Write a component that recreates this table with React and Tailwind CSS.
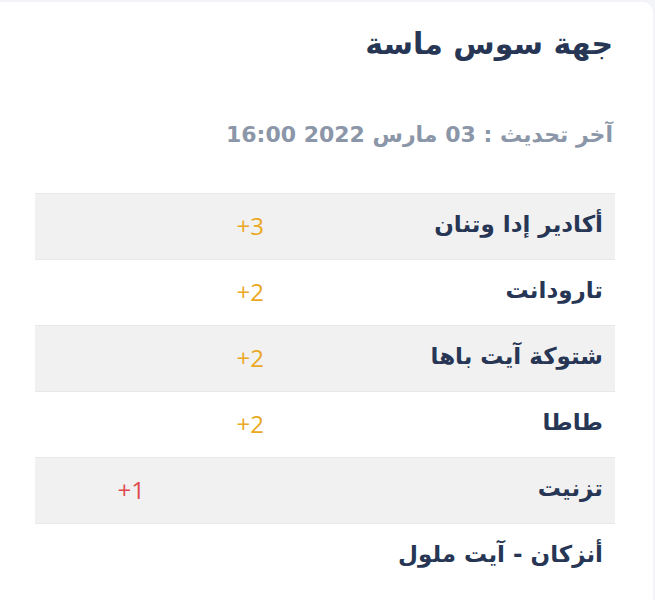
import React from 'react';

const rows = [
    { name: 'أكادير إدا وتنان', level: 2, value: '+3' },
    { name: 'تارودانت', level: 2, value: '+2' },
    { name: 'شتوكة آيت باها', level: 2, value: '+2' },
    { name: 'طاطا', level: 2, value: '+2' },
    { name: 'تزنيت', level: 3, value: '+1' },
    { name: 'أنزكان - آيت ملول', level: 0, value: '' },
];

const App = () => {
    return (
        <div className="min-h-[600px] bg-[#f3f4f8] pt-[2px] pr-[2px]">
            <div dir="rtl" className="min-h-[598px] bg-white rounded-tr-[10px] pr-[38px] pl-[35px] pt-[24px] font-['DejaVu_Sans','Noto_Sans',sans-serif]">
                <h1 className="pr-[2px] text-[30px] leading-[36px] font-bold text-[#263654]">
                    جهة سوس ماسة
                </h1>

                <p className="mt-[59px] pr-[2px] text-[22px] leading-[27px] font-bold text-[#8b96a8]">
                    آخر تحديث : 03 مارس 2022 16:00
                </p>

                <div className="mt-[45px]">
                    {rows.map((row, i) => (
                        <div
                            key={i}
                            className={`flex items-center h-[66px] border-t border-[#e8e8e8] ${i % 2 === 0 ? 'bg-[#f1f1f1]' : 'bg-white'}`}
                        >
                            <div className="w-[339px] pr-[12px] pb-[4px] text-[23px] font-bold text-[#263654]">
                                {row.name}
                            </div>
                            <div className="w-[119px] pr-[12px] pb-[2px] font-['Open_Sans',sans-serif] text-[24px] text-[#eaa823]">
                                {row.level === 2 && <span dir="ltr">{row.value}</span>}
                            </div>
                            <div className="w-[119px] pr-[12px] pb-[2px] font-['Open_Sans',sans-serif] text-[24px] text-[#e04a4f]">
                                {row.level === 3 && <span dir="ltr">{row.value}</span>}
                            </div>
                        </div>
                    ))}
                </div>
            </div>
        </div>
    );
};

export default App;
